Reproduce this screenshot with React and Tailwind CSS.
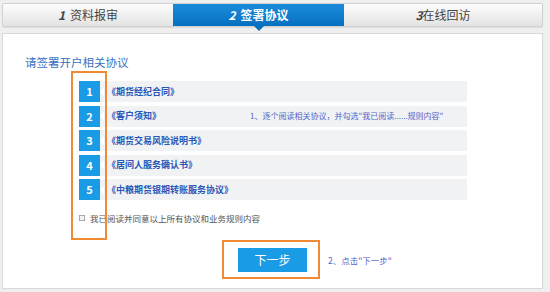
import React from 'react';

const font = { fontFamily: '"Noto Sans CJK SC", "Liberation Sans", sans-serif' };

const agreements = [
    '《期货经纪合同》',
    '《客户须知》',
    '《期货交易风险说明书》',
    '《居间人服务确认书》',
    '《中粮期货银期转账服务协议》',
];

const App = () => {
    return (
        <div
            className="relative w-[550px] h-[292px] overflow-hidden bg-[#efefef] pt-[3px] px-[2px]"
            style={font}
        >
            {/* Step tabs */}
            <div className="flex h-[24px] w-[541px] border border-[#d2d2d2] rounded-[2px] bg-gradient-to-b from-[#fdfdfd] to-[#e3e3e3] shadow-[0_1px_1px_rgba(0,0,0,0.08)]">
                <div className="w-[170px] flex items-center justify-center gap-[5px] text-[12px] text-[#444]">
                    <span className="italic font-bold">1</span>
                    <span>资料报审</span>
                </div>
                <div className="relative w-[171px] flex items-center justify-center gap-[5px] text-[12px] text-white font-bold bg-gradient-to-b from-[#1a8cdb] to-[#0670c0]">
                    <span className="italic">2</span>
                    <span>签署协议</span>
                    <span className="absolute left-1/2 -translate-x-1/2 top-full w-0 h-0 border-x-[5px] border-x-transparent border-t-[5px] border-t-[#0670c0]" />
                </div>
                <div className="flex-1 flex items-center justify-center text-[12px] text-[#444]">
                    <span className="italic font-bold">3</span>
                    <span>在线回访</span>
                </div>
            </div>

            {/* Content panel */}
            <div className="mt-[6px] w-[541px] h-[256px] bg-white border border-[#d9d9d9]">
                <div className="ml-[22px] mt-[20px] text-[11.5px] leading-[16px] text-[#3a72c2]">
                    请签署开户相关协议
                </div>

                <div className="ml-[76px] mt-[11px] flex flex-col gap-[3.5px]">
                    {agreements.map((item, index) => (
                        <div key={item} className="flex h-[21px]">
                            <div className="w-[21px] h-[21px] flex items-center justify-center bg-[#1a9be6] text-white text-[11px] font-bold">
                                {index + 1}
                            </div>
                            <div className="w-[367px] flex items-center bg-[#f1f2f4]">
                                <span className="w-0 h-0 border-y-[4px] border-y-transparent border-r-[4px] border-r-white" />
                                <span className="ml-[3px] w-[143px] text-[9px] font-bold text-[#2858b8] whitespace-nowrap">
                                    {item}
                                </span>
                                {index === 1 && (
                                    <span className="text-[8px] text-[#5266c8] whitespace-nowrap">
                                        1、逐个阅读相关协议，并勾选"我已阅读......规则内容"
                                    </span>
                                )}
                            </div>
                        </div>
                    ))}
                </div>

                <div className="ml-[76px] mt-[11px] h-[14px] flex items-center gap-[5px]">
                    <span className="w-[6px] h-[6px] border border-[#a8a8a8] bg-[#f4f4f4]" />
                    <span className="text-[8.5px] text-[#555]">我已阅读并同意以上所有协议和业务规则内容</span>
                </div>

                <div className="ml-[235px] mt-[23px] flex items-center">
                    <button
                        type="button"
                        className="w-[69px] h-[24px] bg-[#1a9be6] text-white text-[12px]"
                    >
                        下一步
                    </button>
                    <span className="ml-[21px] text-[8.5px] text-[#5266c8]">2、点击"下一步"</span>
                </div>
            </div>

            {/* Annotation boxes */}
            <div className="absolute left-[71px] top-[71px] w-[36px] h-[169px] border-2 border-[#f08a34]" />
            <div className="absolute left-[222px] top-[240px] w-[98px] h-[39px] border-2 border-[#f08a34]" />
        </div>
    );
};

export default App;
